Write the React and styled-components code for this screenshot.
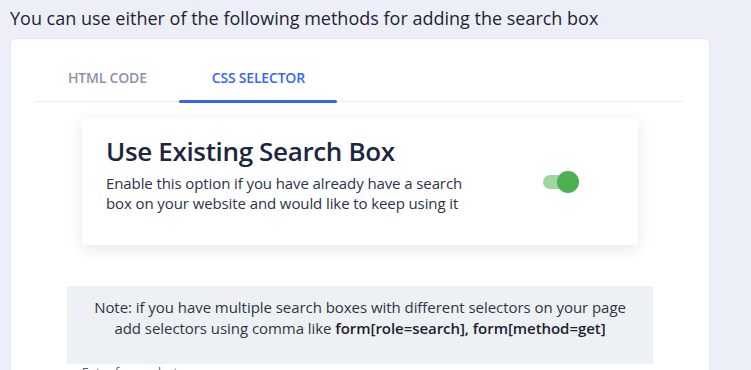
import React, { useState } from "react";
import styled, { createGlobalStyle } from "styled-components";

const GlobalStyle = createGlobalStyle`
  body {
    margin: 0;
    background: #eceff7;
    font-family: "Open Sans", "Noto Sans", sans-serif;
    overflow: hidden;
  }
`;

export default function App() {
  const [tab, setTab] = useState("css");
  const [enabled, setEnabled] = useState(true);
  return (
    <Page>
      <GlobalStyle />
      <Heading>You can use either of the following methods for adding the search box</Heading>
      <Card>
        <TabList>
          <Tab active={tab === "html"} onClick={() => setTab("html")}>
            HTML CODE
          </Tab>
          <Tab active={tab === "css"} onClick={() => setTab("css")}>
            CSS SELECTOR
          </Tab>
        </TabList>
        <OptionPanel>
          <OptionText>
            <OptionTitle>Use Existing Search Box</OptionTitle>
            <OptionDesc>
              Enable this option if you have already have a search box on your
              website and would like to keep using it
            </OptionDesc>
          </OptionText>
          <Switch on={enabled} onClick={() => setEnabled(!enabled)}>
            <Knob on={enabled} />
          </Switch>
        </OptionPanel>
        <Note>
          Note: if you have multiple search boxes with different selectors on
          your page
          <br />
          add selectors using comma like{" "}
          <strong>form[role=search], form[method=get]</strong>
        </Note>
        <FieldLabel>Enter form selectors</FieldLabel>
      </Card>
    </Page>
  );
}

const Page = styled.div`
  padding: 6px 0 0 10px;
`;

const Heading = styled.h2`
  margin: 0 0 9px;
  font-size: 18px;
  font-weight: 400;
  line-height: 24px;
  color: #1f2433;
`;

const Card = styled.div`
  margin-left: 1px;
  width: 698px;
  background: #fff;
  border-radius: 5px;
  box-shadow: 0 0 0 1px #e4e7f0;
  padding: 24px 25px 20px 24px;
  box-sizing: border-box;
  height: 400px;
`;

const TabList = styled.div`
  display: flex;
  border-bottom: 1px solid #eceef3;
`;

const Tab = styled.div`
  position: relative;
  padding: 6px 32px 14px 33px;
  font-size: 14px;
  line-height: 18px;
  font-weight: 600;
  letter-spacing: -0.2px;
  color: ${(p) => (p.active ? "#3666f6" : "#8a93a5")};
  cursor: pointer;
  &::after {
    content: "";
    display: ${(p) => (p.active ? "block" : "none")};
    position: absolute;
    left: 0;
    right: 0;
    bottom: -2px;
    height: 3px;
    border-radius: 2px;
    background: #3666f6;
  }
`;

const OptionPanel = styled.div`
  margin: 16px 0 0 47px;
  width: 556px;
  height: 127px;
  box-sizing: border-box;
  padding: 16px 24px 0;
  display: flex;
  align-items: flex-start;
  background: #fff;
  border-radius: 4px;
  box-shadow: 0 4px 16px rgba(20, 30, 60, 0.1);
`;

const OptionText = styled.div`
  width: 372px;
`;

const OptionTitle = styled.div`
  font-size: 26px;
  line-height: 34px;
  font-weight: 600;
  color: #1d2640;
  letter-spacing: -0.35px;
`;

const OptionDesc = styled.div`
  margin-top: 5px;
  font-size: 15px;
  line-height: 20px;
  color: #2b3348;
  letter-spacing: -0.1px;
`;

const Switch = styled.div`
  position: relative;
  margin: 41px 0 0 65px;
  width: 24px;
  height: 14px;
  border-radius: 7px;
  background: ${(p) => (p.on ? "#9fd6a1" : "#ccc")};
  cursor: pointer;
`;

const Knob = styled.div`
  position: absolute;
  top: -4px;
  left: ${(p) => (p.on ? "14px" : "-4px")};
  width: 22px;
  height: 22px;
  border-radius: 50%;
  background: #4caf50;
`;

const Note = styled.div`
  margin: 41px 0 0 32px;
  width: 586px;
  height: 78px;
  box-sizing: border-box;
  padding: 11px 6px 0;
  background: #eef1f3;
  text-align: center;
  font-size: 15px;
  line-height: 21px;
  color: #2f3544;
  letter-spacing: -0.05px;
  strong {
    font-weight: 600;
    color: #1d2232;
  }
`;

const FieldLabel = styled.div`
  margin: 1px 0 0 47px;
  font-size: 12px;
  line-height: 16px;
  color: #555c6b;
`;
